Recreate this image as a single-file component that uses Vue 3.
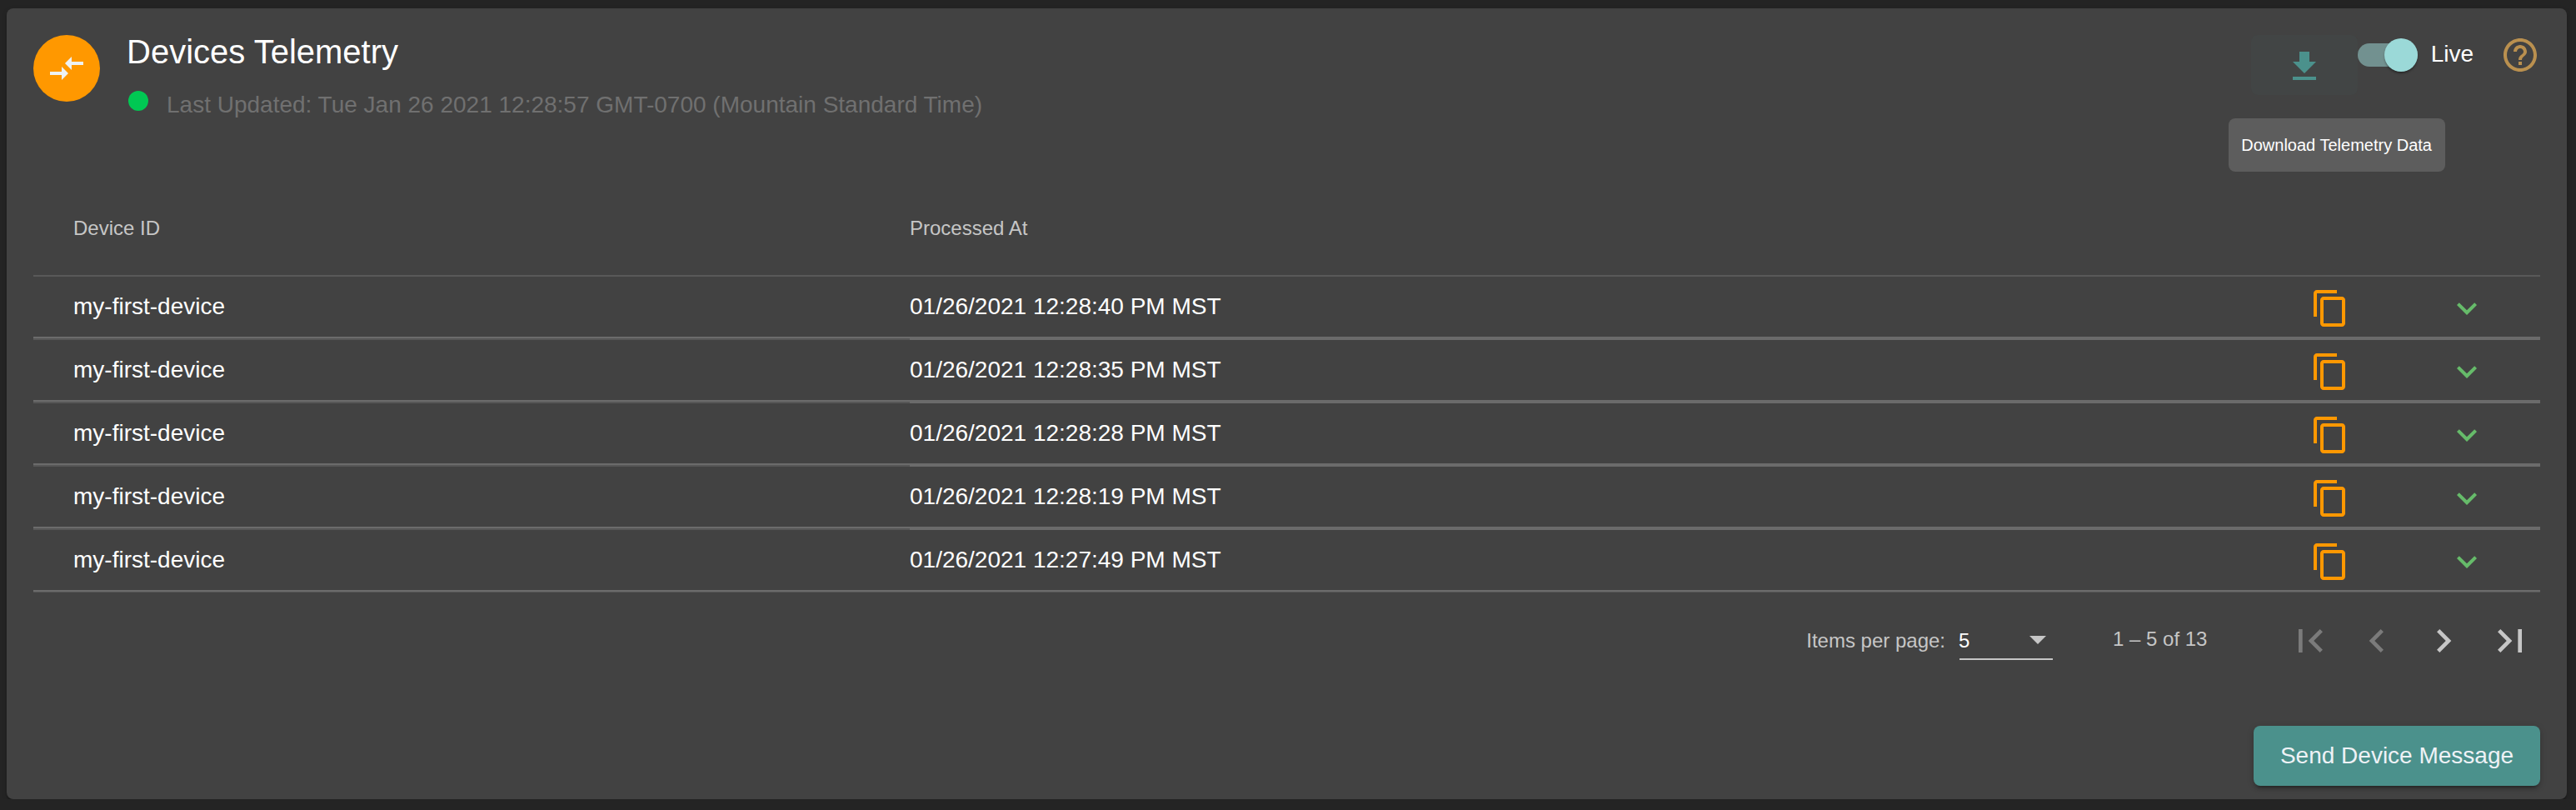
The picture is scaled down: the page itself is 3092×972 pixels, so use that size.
<script setup>
import { ref } from 'vue'

const live = ref(true)
const rows = [
  '01/26/2021 12:28:40 PM MST',
  '01/26/2021 12:28:35 PM MST',
  '01/26/2021 12:28:28 PM MST',
  '01/26/2021 12:28:19 PM MST',
  '01/26/2021 12:27:49 PM MST',
]
const pages = [
  { label: 'First page', off: true, d: 'M18.41 16.59L13.82 12l4.59-4.59L17 6l-6 6 6 6zM6 6h2v12H6z' },
  { label: 'Previous page', off: true, d: 'M15.41 7.41L14 6l-6 6 6 6 1.41-1.41L10.83 12z' },
  { label: 'Next page', off: false, d: 'M10 6L8.59 7.41 13.17 12l-4.58 4.59L10 18l6-6z' },
  { label: 'Last page', off: false, d: 'M5.59 7.41L10.18 12l-4.59 4.59L7 18l6-6-6-6zM16 6h2v12h-2z' },
]
</script>

<template>
  <main class="card">
    <header class="head">
      <div class="avatar">
        <svg class="i48" viewBox="0 0 24 24"><path d="M9.01 14H2v2h7.01v3L13 15l-3.99-4v3zm5.98-1v-3H22V8h-7.01V5L11 9l3.99 4z" /></svg>
      </div>
      <div class="titles">
        <h1>Devices Telemetry</h1>
        <div class="status">
          <i class="dot"></i>
          <span>Last Updated: Tue Jan 26 2021 12:28:57 GMT-0700 (Mountain Standard Time)</span>
        </div>
      </div>
      <div class="tools">
        <button class="download" aria-label="Download">
          <svg class="i48" viewBox="0 0 24 24"><path d="M19 9h-4V3H9v6H5l7 7 7-7zM5 18v2h14v-2H5z" /></svg>
          <span class="tooltip">Download Telemetry Data</span>
        </button>
        <button class="toggle" role="switch" :aria-checked="live" @click="live = !live">
          <i class="track" :class="{ on: live }"><i class="thumb"></i></i>
          <span>Live</span>
        </button>
        <svg class="i48 help" viewBox="0 0 24 24"><path d="M11 18h2v-2h-2v2zm1-16C6.48 2 2 6.48 2 12s4.48 10 10 10 10-4.48 10-10S17.52 2 12 2zm0 18c-4.41 0-8-3.59-8-8s3.59-8 8-8 8 3.59 8 8-3.59 8-8 8zm0-14c-2.21 0-4 1.79-4 4h2c0-1.1.9-2 2-2s2 .9 2 2c0 2-3 1.75-3 5h2c0-2.25 3-2.5 3-5 0-2.21-1.79-4-4-4z" /></svg>
      </div>
    </header>

    <section class="table">
      <div class="row th">
        <div class="cell first">Device ID</div>
        <div class="cell">Processed At</div>
        <div class="cell"></div>
        <div class="cell"></div>
      </div>
      <div v-for="time in rows" :key="time" class="row td">
        <div class="cell first"><span>my-first-device</span></div>
        <div class="cell"><span>{{ time }}</span></div>
        <div class="cell">
          <svg class="i48 copy" viewBox="0 0 24 24"><path d="M16 1H4c-1.1 0-2 .9-2 2v14h2V3h12V1zm3 4H8c-1.1 0-2 .9-2 2v14c0 1.1.9 2 2 2h11c1.1 0 2-.9 2-2V7c0-1.1-.9-2-2-2zm0 16H8V7h11v14z" /></svg>
        </div>
        <div class="cell">
          <svg class="i48 expand" viewBox="0 0 24 24"><path d="M16.59 8.59L12 13.17 7.41 8.59 6 10l6 6 6-6z" /></svg>
        </div>
      </div>
    </section>

    <nav class="paginator">
      <span class="label">Items per page:</span>
      <div class="select"><span>5</span><i class="caret"></i></div>
      <span class="range">1 – 5 of 13</span>
      <button v-for="p in pages" :key="p.label" class="page" :class="{ off: p.off }" :aria-label="p.label">
        <svg viewBox="0 0 24 24"><path :d="p.d" /></svg>
      </button>
    </nav>

    <footer class="foot"><button class="send">Send Device Message</button></footer>
  </main>
</template>

<style>
body { background: #242424; overflow: hidden; }
#app { display: flow-root; }
</style>

<style scoped>
* { box-sizing: border-box; }
button { border: 0; padding: 0; background: none; font: inherit; color: inherit; }
svg { display: block; fill: currentColor; flex: none; }
.i48 { width: 48px; height: 48px; }
.card {
  display: flex; flex-direction: column;
  width: 3073px; height: 949px; margin: 10px 0 0 8px; padding: 32px 32px 16px;
  border-radius: 8px; background: #424242; color: #fff;
  font: 28px/32px "Liberation Sans", Arial, sans-serif;
  box-shadow: 0 4px 2px -2px rgba(0,0,0,.2), 0 2px 2px rgba(0,0,0,.14), 0 2px 6px rgba(0,0,0,.12);
}
.head { display: flex; align-items: flex-start; height: 176px; }
.avatar { display: grid; place-items: center; width: 80px; height: 80px; border-radius: 50%; background: #ff9800; color: #eef2f6; }
.titles { margin: -4px 0 0 32px; }
h1 { margin: 0 0 23px; font-size: 40px; line-height: 48px; font-weight: 400; }
.status { display: flex; gap: 22px; padding-left: 2px; color: #707070; }
.status span { padding-top: 1px; }
.dot { width: 24px; height: 24px; border-radius: 50%; background: #00c853; }
.tools { display: flex; align-items: flex-start; margin-left: auto; }
.download { position: relative; display: flex; justify-content: center; width: 128px; height: 72px; padding-top: 14px; border-radius: 8px; background: #424545; color: #4b918c; }
.tooltip {
  position: absolute; top: 100px; left: -27px; width: 260px; height: 64px;
  border-radius: 8px; background: #5d5d5d; color: #fff; font-size: 20px; line-height: 64px; text-align: center; white-space: nowrap;
}
.toggle { display: flex; align-items: center; height: 48px; gap: 16px; }
.toggle span { margin-top: -2px; }
.track { display: flex; align-items: center; width: 72px; height: 28px; border-radius: 14px; background: #555; }
.track.on { justify-content: flex-end; background: #729190; }
.thumb { width: 40px; height: 40px; border-radius: 50%; background: #9bd9d8; box-shadow: 0 3px 2px -1px rgba(0,0,0,.2), 0 2px 3px rgba(0,0,0,.2); }
.help { margin: 0 0 0 32px; color: #ba904f; }

.row { display: grid; grid-template-columns: 1052px 1681px 164px 112px; }
.cell { display: flex; align-items: center; }
.first { padding-left: 48px; }
.th { height: 114px; border-bottom: 2px solid #595959; color: #c6c6c6; font-size: 24px; }
.td { height: 76px; }
.td .cell { border-bottom: 4px solid #6b6b6b; }
.td .first { border-bottom: 2px solid #575757; box-shadow: inset 0 -2px #6b6b6b; padding-bottom: 2px; }
.td:last-child { height: 75px; }
.td:last-child .cell { border-bottom: 1px solid #575757; box-shadow: inset 0 -2px #6b6b6b; padding-bottom: 2px; }
.td span { margin-top: -1px; }
.copy { margin-top: 4px; color: #ff9800; }
.expand { margin-top: 4px; color: #66bb6a; }

.paginator { display: flex; align-items: center; justify-content: flex-end; height: 112px; margin: 2px -4px 0 0; color: #c6c6c6; font-size: 24px; }
.label { margin: 0 17px 0 0; }
.select { display: flex; align-items: flex-start; justify-content: space-between; width: 112px; height: 40px; margin-top: 6px; padding-right: 8px; border-bottom: 2px solid #c6c6c6; color: #fff; }
.select span { margin: 1px 0 0 -1px; }
.caret { margin-top: 11px; border: 10px solid transparent; border-top-color: #c6c6c6; border-bottom: 0; }
.range { width: 197px; margin: -4px 0 0 72px; }
.page { display: grid; place-items: center; width: 80px; height: 80px; }
.page svg { width: 56px; height: 56px; }
.page.off { color: #7b7b7b; }

.foot { display: flex; justify-content: flex-end; margin-top: auto; }
.send {
  width: 344px; height: 72px; border-radius: 8px; background: #4b918c; color: #eef2f6;
  box-shadow: 0 6px 2px -4px rgba(0,0,0,.2), 0 4px 4px rgba(0,0,0,.14), 0 2px 10px rgba(0,0,0,.12);
}
</style>
